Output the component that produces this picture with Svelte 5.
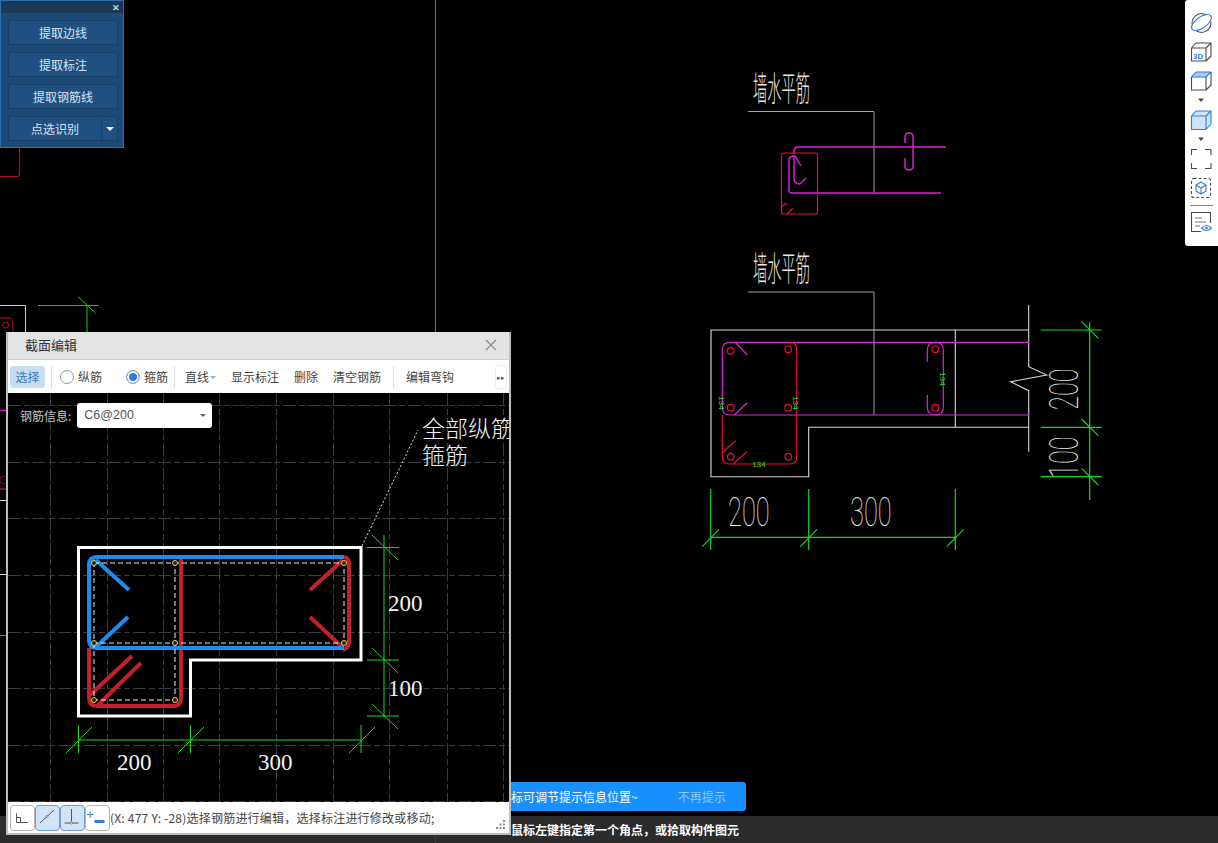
<script>
  const buttons = ['提取边线', '提取标注', '提取钢筋线'];

  // dashed grid of the section editor, in page coordinates
  const gridX = [50, 107, 163, 219, 276, 333, 389, 447, 503];
  const gridY = [405, 462, 518, 575, 632, 688, 745, 801];
  const nodes = [[94, 563], [175, 563], [344, 563], [94, 643], [175, 643], [344, 643], [94, 700], [175, 700]];
  const rebarDots = [[730.7, 351], [788.3, 349.3], [730.7, 407.7], [788.3, 407.7], [730.7, 456.7], [788.3, 456.7], [935.3, 349.3], [935.3, 407.7]];
</script>

<div class="screen">
  <svg class="cad" width="1218" height="843" viewBox="0 0 1218 843">
    <line x1="435.5" y1="0" x2="435.5" y2="816" stroke="#5c7a74" />

    <!-- bits of the drawing behind the panels -->
    <path d="M19.5 148V174Q19.5 176.5 17 176.5H0" fill="none" stroke="#a01525" stroke-width="1.2" />
    <path d="M0 305.5H25.5V332" fill="none" stroke="#ccc" />
    <path d="M0 318H8Q13 318 13 323V332" fill="none" stroke="#b01525" />
    <circle cx="5.7" cy="325" r="3" fill="none" stroke="#b01525" />
    <path d="M38 305.5H99M87 305V332M78 296.7L95.7 313.3" fill="none" stroke="#12c822" />
    <path d="M0 410.5H7" stroke="#c81fc8" stroke-width="1.5" />
    <circle cx="4" cy="480" r="4" fill="none" stroke="#801020" />
    <path d="M0 489H7" stroke="#b01525" stroke-width="1.5" />
    <path d="M0 500.5H7M0 574.5H7" stroke="#ddd" />
    <path d="M0 635.5H7" stroke="#12a822" />

    <!-- upper detail -->
    <text class="cad-title" transform="translate(753 101) scale(0.42 1)">墙水平筋</text>
    <path d="M748 111.5H874V193" fill="none" stroke="#a3a38f" />
    <g fill="none" stroke="#e020e0" stroke-width="1.4">
      <path d="M794 154V151Q794 147 798 147H946" />
      <path d="M941 193H792Q789 193 789 190V160Q789 156 795 156L801 166" />
      <path d="M794 156V178Q794 184 800 184L806 178" />
      <path d="M905 143V137Q905 133 909 133Q913 133 913 137V166Q913 170 909 170Q905 170 905 166V158" />
    </g>
    <g fill="none" stroke="#e8102c" stroke-width="1.2">
      <rect x="781.5" y="153" width="36" height="61" rx="2" />
      <path d="M781 207L787 203M787 214L793 208" />
    </g>

    <!-- lower detail -->
    <text class="cad-title" transform="translate(753 281) scale(0.42 1)">墙水平筋</text>
    <path d="M748 292H874V415" fill="none" stroke="#a3a38f" />
    <g fill="none" stroke="#d8d8d8" stroke-width="1.1">
      <path d="M1029 330H711V476.7H808.7V427.3H1029" />
      <path d="M955.3 330V427.3" />
      <path d="M1028.7 305V366.7L1046.7 375L1010.7 381.7L1028.7 390.7V451.7" />
    </g>
    <g fill="none" stroke="#e020e0" stroke-width="1.2">
      <path d="M1029 342.3H730Q722.3 342.3 722.3 350V407Q722.3 415 730 415H1029" />
      <path d="M735 342L747.3 355M747.3 402.7L734.3 415" />
      <path d="M927.3 361.7V350Q927.3 342.3 935.3 342.3Q943.3 342.3 943.3 350V407Q943.3 415 935.3 415Q927.3 415 927.3 407V395" />
    </g>
    <g fill="none" stroke="#e8102c" stroke-width="1.2">
      <path d="M790 342.3Q796.7 342.3 796.7 350V457Q796.7 464 790 464H730Q722.3 464 722.3 457V415" />
      <path d="M723 452L735.7 440.7M733 464L746.7 451.7" />
      {#each rebarDots as [cx, cy]}
        <circle {cx} {cy} r="3.3" />
      {/each}
    </g>
    <g class="tiny">
      <text transform="translate(719 403) rotate(90)" text-anchor="middle">134</text>
      <text transform="translate(793 403) rotate(90)" text-anchor="middle">134</text>
      <text transform="translate(940 379) rotate(90)" text-anchor="middle">134</text>
      <text x="759" y="467" text-anchor="middle">134</text>
    </g>
    <g fill="none" stroke="#12d822" stroke-width="1.2">
      <path d="M710.7 489V550M808.7 489V550M955.3 489V550M710.7 537.3H955.3" />
      <path d="M702.3 546.7L719 529.3M800.3 546.7L817 529.3M946.9 546.7L963.6 529.3" />
      <path d="M1040.7 330H1101.7M1040.7 427.3H1101.7M1040.7 476.7H1101.7M1089.7 322V500" />
      <path d="M1081.7 321.7L1098.3 338.3M1081.7 419L1098.3 435.6M1081.7 468.4L1098.3 485" />
    </g>
    <g class="cad-dim">
      <text transform="translate(728 526) scale(0.62 1)">200</text>
      <text transform="translate(850 526) scale(0.62 1)">300</text>
      <text transform="translate(1078 410) rotate(-90) scale(0.62 1)">200</text>
      <text transform="translate(1078 478) rotate(-90) scale(0.62 1)">100</text>
    </g>
  </svg>

  <div class="tool-panel">
    <div class="tool-head"><span class="tool-close">✕</span></div>
    <div class="tool-list">
      {#each buttons as label}
        <button class="tool-btn">{label}</button>
      {/each}
      <div class="tool-split">
        <button class="tool-btn split-main">点选识别</button>
        <button class="tool-btn split-arrow"><span class="caret-white"></span></button>
      </div>
    </div>
  </div>

  <div class="view-bar">
    <svg width="33" height="246" viewBox="0 0 33 246" fill="none" stroke="#4a4a4a" stroke-width="1.1" stroke-linejoin="round">
      <!-- sphere with orbit -->
      <circle cx="16.5" cy="23" r="9.5" />
      <ellipse cx="16.5" cy="22.5" rx="11.5" ry="5.5" transform="rotate(-35 16.5 22.5)" stroke="#2f7fd8" fill="#fff" />
      <!-- 3D cube -->
      <path d="M6.5 48L11 43H26V56L21 61H6.5ZM6.5 48H21V61M21 48L26 43" />
      <text x="8" y="59" class="icon-3d">3D</text>
      <!-- cube, blue top -->
      <path d="M6.5 77L11 72H26L21 77Z" fill="#a9cdf5" stroke="#2f7fd8" />
      <path d="M6.5 77V90H21V77M21 90L26 85V72" />
      <path d="M13 98.5H19L16 102Z" fill="#4a4a4a" stroke="none" />
      <!-- cube, all blue -->
      <path d="M6.5 116L11 111H26V124L21 129.5H6.5Z" fill="#cfe2f8" stroke="#2f7fd8" />
      <path d="M6.5 116H21V129.5M21 116L26 111" stroke="#2f7fd8" />
      <path d="M13 137.5H19L16 141Z" fill="#4a4a4a" stroke="none" />
      <!-- fit to view corners -->
      <path d="M6.5 155V149.5H12M20 149.5H26V155M26 163V168.5H20M12 168.5H6.5V163" />
      <!-- dashed box with cube -->
      <rect x="6.5" y="178.5" width="19" height="19" rx="2" stroke-dasharray="3 2" />
      <path d="M16 182L21 185V191L16 194L11 191V185ZM11 185L16 188L21 185M16 188V194" stroke="#2f7fd8" />
      <line x1="5" y1="205.5" x2="28" y2="205.5" stroke="#888" />
      <!-- list with eye -->
      <path d="M25.5 223V212.5H6.5V231.5H16" />
      <path d="M10 218H17M10 222H21M10 226H15" stroke="#777" />
      <path d="M16.5 228Q21.5 223 26.5 228Q21.5 233 16.5 228Z" stroke="#2f7fd8" />
      <circle cx="21.5" cy="228" r="1.3" fill="#2f7fd8" stroke="none" />
    </svg>
  </div>

  <div class="tip">
    <span>标可调节提示信息位置~</span>
    <span class="tip-off">不再提示</span>
  </div>

  <div class="status">
    <span class="status-left"></span>
    <span class="status-text">鼠标左键指定第一个角点，或拾取构件图元</span>
  </div>

  <div class="dialog">
    <div class="dialog-title">
      <span>截面编辑</span>
      <svg width="12" height="12" viewBox="0 0 12 12" stroke="#8a8a8a" stroke-width="1.1"><path d="M1 1L11 11M11 1L1 11" /></svg>
    </div>

    <div class="toolbar">
      <button class="tb-item tb-active">选择</button>
      <span class="tb-sep"></span>
      <label class="radio radio-first"><span class="dot"></span>纵筋</label>
      <label class="radio radio-second"><span class="dot dot-on"></span>箍筋</label>
      <span class="tb-sep"></span>
      <button class="tb-item tb-line">直线<span class="caret-grey"></span></button>
      <button class="tb-item">显示标注</button>
      <button class="tb-item">删除</button>
      <button class="tb-item">清空钢筋</button>
      <span class="tb-sep tb-sep-wide"></span>
      <button class="tb-item tb-hook">编辑弯钩</button>
      <button class="tb-more">▸▸</button>
    </div>

    <div class="canvas">
      <svg class="section" width="501" height="410" viewBox="8 393 501 410">
        <g stroke="#3a3a44" stroke-dasharray="13 3 6 3" fill="none">
          {#each gridX as x}
            <line x1={x + 0.5} y1="393" x2={x + 0.5} y2="803" />
          {/each}
          {#each gridY as y}
            <line x1="8" y1={y + 0.5} x2="509" y2={y + 0.5} />
          {/each}
        </g>

        <path d="M78.5 547.5H361V660H190.5V716H78.5Z" fill="none" stroke="#fff" stroke-width="3" />

        <path d="M343 650Q349 648 349 642V564Q349 558 344 557" fill="none" stroke="#c4202a" stroke-width="4" />
        <path d="M89 648V698Q89 706 97 706H173Q181 706 181 698V557" fill="none" stroke="#c4202a" stroke-width="4" />
        <path d="M90 695L132 656M98 705L141 663M343 560L310 590M342 647L310 617" stroke="#c4202a" stroke-width="4" />
        <path d="M344 557H97Q89 557 89 565V640Q89 648 97 648H344" fill="none" stroke="#1b8cf0" stroke-width="4" />
        <path d="M96 560L129 590M96 647L128 617" stroke="#1b8cf0" stroke-width="4" />

        <path d="M94 563H344V643H94ZM94 643V700H175V563" fill="none" stroke="#eee" stroke-dasharray="5 3" />
        {#each nodes as [cx, cy]}
          <circle {cx} {cy} r="2.5" fill="#222" stroke="#f0d050" />
        {/each}

        <line x1="362" y1="546" x2="418" y2="430" stroke="#ddd" stroke-dasharray="2 2" />

        <g fill="none" stroke="#12d822">
          <path d="M384 535V717M367 547.5H399M367 660H399M367 716H399" />
          <path d="M372 535L398 560M372 648L398 673M372 704L398 729" />
          <path d="M78.5 725V753M190.5 725V753M361 725V753M78.5 740H361" />
          <path d="M66 753L92 727M178 753L204 727M349 753L375 727" />
        </g>

        <g class="section-text">
          <text x="388" y="611">200</text>
          <text x="388" y="696">100</text>
          <text x="117" y="770">200</text>
          <text x="258" y="770">300</text>
        </g>
      </svg>

      <div class="rebar-info">
        <span class="rebar-label">钢筋信息:</span>
        <div class="select">C6@200<span class="caret-dark"></span></div>
      </div>

      <div class="annotation">
        <div>全部纵筋</div>
        <div>箍筋</div>
      </div>
    </div>

    <div class="dialog-foot">
      <div class="snap-group">
        <button class="snap">
          <svg width="24" height="24" fill="none" stroke="#555"><path d="M5.5 7.5V16.5H17M5.5 11.5H9.5V16" /></svg>
        </button>
        <button class="snap snap-on">
          <svg width="24" height="24" fill="none" stroke="#555"><path d="M4 17L18 4" /><circle cx="11" cy="10.5" r="1" fill="#d3e3f7" stroke="#888" /></svg>
        </button>
        <button class="snap snap-on">
          <svg width="24" height="24" fill="none" stroke="#555"><path d="M10.5 3V17M3.5 17H17.5" /><circle cx="10.5" cy="17" r="1.2" fill="#d3e3f7" stroke="#888" /></svg>
        </button>
        <button class="snap">
          <svg width="24" height="24" fill="none"><path d="M1 8.5H7.5M4.2 5.5V12" stroke="#2f7fd8" /><rect x="8.5" y="14" width="10" height="3" fill="#2f7fd8" /></svg>
        </button>
      </div>
      <span class="foot-text">(X: 477 Y: -28)选择钢筋进行编辑，选择标注进行修改或移动;</span>
      <svg class="grip" width="10" height="9" fill="#888">
        <rect x="7" y="0" width="2" height="2" /><rect x="3.5" y="3.5" width="2" height="2" /><rect x="7" y="3.5" width="2" height="2" />
        <rect x="0" y="7" width="2" height="2" /><rect x="3.5" y="7" width="2" height="2" /><rect x="7" y="7" width="2" height="2" />
      </svg>
    </div>
  </div>
</div>

<style>
  :global(body) {
    background: #000;
  }

  .screen {
    position: relative;
    width: 1218px;
    height: 843px;
    overflow: hidden;
    background: #000;
    font-family: "Noto Sans CJK SC", "Liberation Sans", sans-serif;
    font-size: 12px;
  }

  button {
    font: inherit;
    padding: 0;
    border: none;
    background: none;
  }

  .cad {
    position: absolute;
    left: 0;
    top: 0;
  }

  .cad-title {
    font-size: 34px;
    font-weight: 300;
    fill: #e8e8e8;
  }

  .cad-dim text {
    font-family: Roboto, "Liberation Sans", sans-serif;
    font-weight: 100;
    font-size: 41px;
    fill: #e8e8e8;
  }

  .tiny text {
    font-family: "Liberation Sans", sans-serif;
    font-size: 8px;
    fill: #20e030;
  }

  /* extraction panel, top left */
  .tool-panel {
    position: absolute;
    left: 0;
    top: 0;
    width: 122px;
    height: 146px;
    background: #1e4a78;
    border: 1px solid #2d6ea8;
  }

  .tool-head {
    display: flex;
    justify-content: flex-end;
    align-items: center;
    box-sizing: border-box;
    height: 12px;
    background: #1a3855;
    padding: 2px 3px 0 0;
  }

  .tool-close {
    color: #c8d8e8;
    font-size: 9px;
    line-height: 10px;
    font-weight: bold;
  }

  .tool-list {
    display: flex;
    flex-direction: column;
    gap: 7px;
    padding: 7px 5px 0 7px;
  }

  .tool-btn {
    height: 25px;
    width: 110px;
    color: #d6e4f2;
    background: #20507f;
    border: 1px solid #1a4068;
  }

  .tool-split {
    display: flex;
  }

  .split-main {
    flex: 1;
    border-right: none;
  }

  .split-arrow {
    flex: none;
    width: 17px;
    display: flex;
    align-items: center;
    justify-content: center;
  }

  .caret-white {
    width: 0;
    height: 0;
    border-left: 4px solid transparent;
    border-right: 4px solid transparent;
    border-top: 4px solid #e8f0f8;
  }

  /* view toolbar, top right */
  .view-bar {
    position: absolute;
    right: 0;
    top: 0;
    width: 33px;
    height: 246px;
    background: #fff;
    border-radius: 3px 0 0 3px;
  }

  .icon-3d {
    font-family: "Liberation Sans", sans-serif;
    font-size: 8px;
    font-weight: bold;
    fill: #2f7fd8;
    stroke: none;
  }

  .tip {
    position: absolute;
    left: 500px;
    top: 782px;
    width: 246px;
    height: 29px;
    box-sizing: border-box;
    padding-left: 11px;
    display: flex;
    align-items: center;
    gap: 40px;
    background: #1890ff;
    border-radius: 3px;
    color: #fff;
  }

  .tip-off {
    color: #8ccaff;
  }

  .status {
    position: absolute;
    left: 0;
    right: 0;
    bottom: 0;
    height: 27px;
    display: flex;
    align-items: center;
    background: #2b2b2b;
  }

  .status-left {
    width: 435px;
    height: 100%;
    border-right: 1px solid #3c3c3c;
  }

  .status-text {
    margin-left: 75px;
    color: #fff;
    font-weight: 700;
  }

  /* section editor window */
  .dialog {
    position: absolute;
    left: 6px;
    top: 332px;
    width: 505px;
    height: 503px;
    display: flex;
    flex-direction: column;
    box-sizing: border-box;
    background: #fff;
    border: 2px solid #bdbdbd;
    border-top: none;
  }

  .dialog-title {
    flex: none;
    height: 25px;
    display: flex;
    align-items: center;
    justify-content: space-between;
    padding: 0 12px 2px 17px;
    background: #e3e3e3;
    border-bottom: 1px solid #d0d0d0;
    color: #333;
    font-size: 13px;
  }

  .toolbar {
    flex: none;
    height: 33px;
    box-sizing: border-box;
    display: flex;
    align-items: center;
    color: #444;
    background: #fff;
  }

  .tb-item {
    color: #444;
    height: 22px;
    margin-left: 15px;
    white-space: nowrap;
  }

  .tb-active {
    margin-left: 2px;
    width: 35px;
    background: #c8ddf2;
    color: #3a78b5;
    border-radius: 3px;
  }

  .tb-sep {
    width: 1px;
    height: 22px;
    background: #ddd;
    margin-left: 6px;
  }

  .tb-sep-wide {
    margin-left: 12px;
  }

  .tb-hook {
    margin-left: 12px;
  }

  .radio {
    display: flex;
    align-items: center;
    gap: 4px;
  }

  .radio-first {
    margin-left: 8px;
    width: 66px;
  }

  .radio-second {
    width: 42px;
  }

  .dot {
    width: 12px;
    height: 12px;
    border: 1px solid #999;
    border-radius: 50%;
    background: #fff;
  }

  .dot-on {
    border-color: #7fa9d6;
    box-shadow: inset 0 0 0 2px #fff;
    background: #2f7fd8;
  }

  .tb-line {
    margin-left: 10px;
    width: 31px;
    text-align: left;
    position: relative;
  }

  .caret-grey {
    position: absolute;
    right: 0;
    top: 10px;
    border-left: 3px solid transparent;
    border-right: 3px solid transparent;
    border-top: 3px solid #aaa;
  }

  .tb-more {
    margin-left: auto;
    margin-right: 2px;
    width: 12px;
    height: 24px;
    border: 1px solid #eee;
    border-radius: 3px;
    font-size: 7px;
    color: #555;
  }

  .canvas {
    position: relative;
    flex: 1;
    background: #000;
    overflow: hidden;
  }

  .section {
    position: absolute;
    left: 0;
    top: 0;
  }

  .section-text text {
    font-family: "Liberation Serif", serif;
    font-size: 23px;
    fill: #f2f2f2;
  }

  /* the label block runs past the window's right edge and is cut by it */
  .annotation {
    position: absolute;
    left: 414px;
    top: 21px;
    width: 110px;
    color: #f2f2f2;
    font-size: 23px;
    font-weight: 300;
    line-height: 27px;
    white-space: nowrap;
  }

  .rebar-info {
    position: relative;
    display: flex;
    align-items: center;
    gap: 6px;
    padding: 10px 0 0 12px;
  }

  .rebar-label {
    color: #c8c8c8;
  }

  .select {
    position: relative;
    width: 135px;
    height: 25px;
    box-sizing: border-box;
    padding-left: 7px;
    line-height: 25px;
    background: #fff;
    border-radius: 3px;
    color: #555;
    font-family: "Liberation Sans", sans-serif;
    font-size: 12.5px;
  }

  .caret-dark {
    position: absolute;
    right: 6px;
    top: 11px;
    border-left: 3px solid transparent;
    border-right: 3px solid transparent;
    border-top: 3px solid #666;
  }

  .dialog-foot {
    position: relative;
    flex: none;
    height: 31px;
    display: flex;
    align-items: center;
    background: #fff;
    padding-left: 2px;
    color: #444;
  }

  .snap-group {
    display: flex;
    flex: none;
  }

  .snap {
    width: 25px;
    height: 26px;
    box-sizing: border-box;
    border: 1px solid #b5b5b5;
    border-radius: 4px;
    background: #fff;
    display: flex;
    align-items: center;
    justify-content: center;
  }

  .snap-on {
    background: #d3e3f7;
    border-color: #6f9bd0;
  }

  .foot-text {
    white-space: nowrap;
    letter-spacing: 0.22px;
  }

  .grip {
    position: absolute;
    right: 3px;
    bottom: 4px;
  }
</style>
